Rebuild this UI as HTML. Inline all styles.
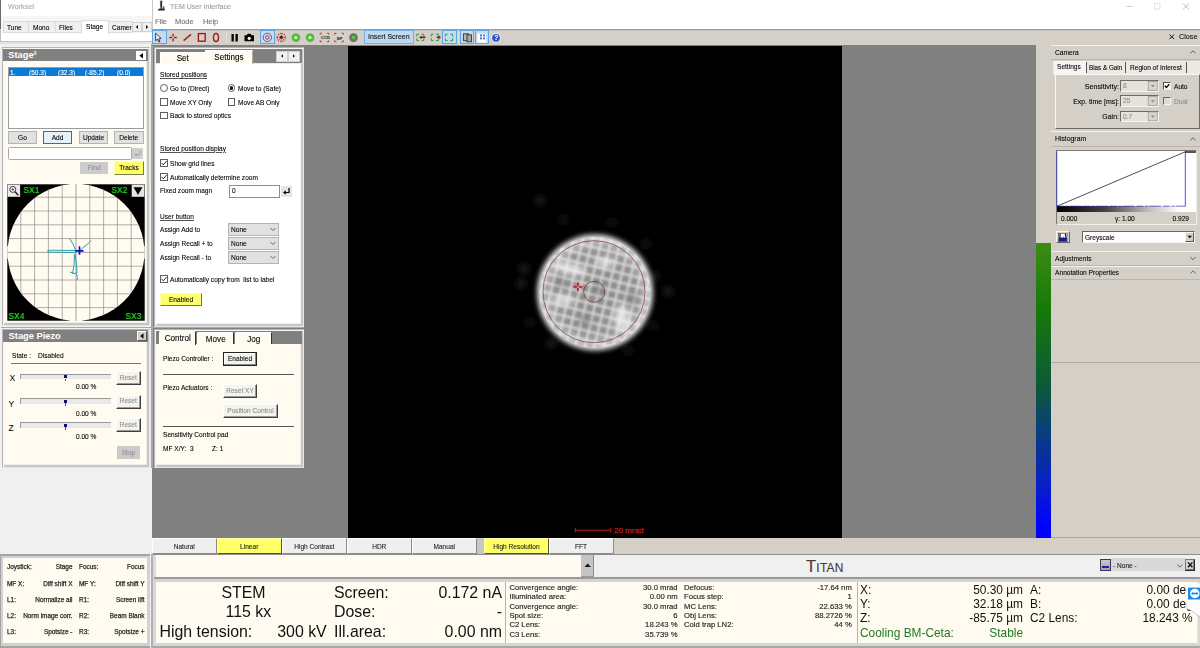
<!DOCTYPE html>
<html><head><meta charset="utf-8"><title>TEM User Interface</title>
<style>
*{box-sizing:border-box;margin:0;padding:0}
html,body{width:1200px;height:648px;overflow:hidden;background:#f0f0f0;font-family:"Liberation Sans",sans-serif;color:#000}
.a{position:absolute}
/* small UI text (MS Sans Serif look: narrow) */
.t{position:absolute;white-space:nowrap;font-size:7.5px;line-height:10px;height:10px;transform:scaleX(.875);transform-origin:0 50%;-webkit-text-stroke:0.100px currentColor}
.t.r{transform-origin:100% 50%;text-align:right}
.t.c{transform-origin:50% 50%;text-align:center}
.u{text-decoration:underline;text-decoration-color:#555;text-decoration-thickness:0.600px;text-underline-offset:0.800px}
.dis{color:#8c8c8c}
/* arial-like text */
.s{position:absolute;white-space:nowrap;font-size:7.7px;line-height:10px;height:10px}
.s.r{text-align:right}
.cream{background:#fffbf0}
.frame{position:absolute;border:1px solid;border-color:#b4b4b4 #e6e6e6 #e6e6e6 #b4b4b4;box-shadow:inset 1.200px 1.200px 0 #f6f6f6,inset -2.200px -2.200px 0 #c6c6c6}
.hdr{position:absolute;background:#808080;color:#fff;font-weight:bold;font-size:9.300px;line-height:12px;white-space:nowrap}
.flat{position:absolute;background:#e1e1e1;border:1px solid #b4b4b4}
.b3d{position:absolute;background:#f4f4ee;border:1px solid;border-color:#fff #404040 #404040 #fff;box-shadow:inset -1px -1px 0 #9a9a9a}
.cb{position:absolute;width:7.800px;height:7.800px;background:#fff;border:1px solid #5e5e5e}
.rb{position:absolute;width:7.800px;height:7.800px;background:#fff;border:1px solid #5e5e5e;border-radius:50%}
.sep{position:absolute;height:1px;background:#555}
</style></head><body>
<!-- ===== Workset window ===== -->
<div class="a" style="left:0;top:0;width:152px;height:41px;background:#fff"></div>
<div class="a" style="left:0;top:16px;width:152px;height:17px;background:#f6f6f6"></div>
<div class="a" style="left:0;top:41px;width:152px;height:1px;background:#c4c4c4"></div>
<div class="a" style="left:0;top:42px;width:152px;height:2px;background:#e2e2e2"></div>
<div class="a" style="left:0;top:0;width:1px;height:29px;background:#6a6a6a"></div>
<div class="a" style="left:0;top:29px;width:1px;height:13px;background:#bdbdbd"></div>
<div class="t" style="left:8px;top:2px;font-size:7.6px;color:#a9a9a9;transform:scaleX(.95)">Workset</div>
<!-- tabs -->
<div class="a" style="left:3px;top:21px;width:79px;height:12px;background:#f0f0f0;border:1px solid #dcdcdc"></div>
<div class="a" style="left:28px;top:22px;width:1px;height:10px;background:#dcdcdc"></div>
<div class="a" style="left:55px;top:22px;width:1px;height:10px;background:#dcdcdc"></div>
<div class="a" style="left:109px;top:21px;width:24px;height:12px;background:#f0f0f0;border:1px solid #dcdcdc;border-left:0"></div>
<div class="a" style="left:81px;top:20px;width:28px;height:14px;background:#fff;border:1px solid #dcdcdc;border-bottom:0"></div>
<div class="t" style="left:7px;top:22.800px">Tune</div>
<div class="t" style="left:33px;top:22.800px">Mono</div>
<div class="t" style="left:59px;top:22.800px">Files</div>
<div class="t" style="left:85.5px;top:21.800px">Stage</div>
<div class="t" style="left:111.5px;top:22.800px">Camer</div>
<div class="a" style="left:132px;top:22px;width:10px;height:10px;background:#f0f0f0;border:1px solid #d0d0d0"></div>
<div class="a" style="left:142px;top:22px;width:10px;height:10px;background:#f0f0f0;border:1px solid #d0d0d0"></div>
<svg class="a" style="left:132px;top:22px" width="20" height="10"><path d="M6 3v4l-2.2-2zM14 3v4l2.2-2z" fill="#111"/></svg>
<!-- ===== Stage panel ===== -->
<div class="frame cream" style="left:2px;top:47px;width:148px;height:279px"></div>
<div class="hdr" style="left:3.300px;top:48.500px;width:144.700px;height:12.700px;padding-left:5px;line-height:12.700px">Stage&#178;</div>
<div class="a" style="left:136px;top:50.5px;width:10px;height:9.5px;background:#fff"></div>
<svg class="a" style="left:136px;top:50.5px" width="10" height="10"><path d="M7 2v5.6L3.4 4.8z" fill="#000"/></svg>
<div class="a" style="left:7.5px;top:66.5px;width:136.5px;height:62px;background:#fff;border:1px solid #9a9ca0"></div>
<div class="a" style="left:8.500px;top:68px;width:134.500px;height:8.300px;background:#0a7ad6"></div>
<div class="t" style="left:10px;top:67.600px;color:#fff">1.</div>
<div class="t" style="left:29px;top:67.600px;color:#fff">(50.3)</div>
<div class="t" style="left:58px;top:67.600px;color:#fff">(32.3)</div>
<div class="t" style="left:85px;top:67.600px;color:#fff">(-85.2)</div>
<div class="t" style="left:117px;top:67.600px;color:#fff">(0.0)</div>
<div class="flat" style="left:8px;top:131px;width:29px;height:13px"></div><div class="t c" style="left:8px;top:132.5px;width:29px">Go</div>
<div class="flat" style="left:43px;top:131px;width:29px;height:13px;border:1.3px solid #0a78d7;background:#e5f1fb"></div><div class="t c" style="left:43px;top:132.5px;width:29px">Add</div>
<div class="flat" style="left:79px;top:131px;width:29px;height:13px"></div><div class="t c" style="left:79px;top:132.5px;width:29px">Update</div>
<div class="flat" style="left:114px;top:131px;width:29.5px;height:13px"></div><div class="t c" style="left:114px;top:132.5px;width:29.5px">Delete</div>
<div class="a" style="left:7.5px;top:146.5px;width:124px;height:13px;background:#fff;border:1px solid #a8a8a8;border-radius:1.500px"></div>
<div class="a" style="left:132px;top:148px;width:11px;height:10.5px;background:#cfcfcf"></div>
<svg class="a" style="left:132px;top:148px" width="11" height="11"><path d="M8 2.5v4.3H3.6" stroke="#a4a4a4" stroke-width="1" fill="none"/><path d="M4.6 4.9v3.8L2.4 6.8z" fill="#a4a4a4"/></svg>
<div class="a" style="left:79.5px;top:161.5px;width:28.5px;height:12px;background:#cccccc"></div><div class="t c dis" style="left:79.5px;top:162.5px;width:28.5px;color:#8f8f8f">Find</div>
<div class="a" style="left:114px;top:161px;width:30px;height:13.5px;background:#ffff6e;border:1px solid;border-color:#ffffb0 #7a7a46 #7a7a46 #ffffb0"></div><div class="t c" style="left:114px;top:162.5px;width:30px">Tracks</div>
<svg class="a" style="left:7px;top:184px" width="138" height="137" viewBox="7 184 138 137">
<defs><clipPath id="mc"><circle cx="76" cy="252.4" r="68.400"/></clipPath></defs>
<rect x="7.3" y="184.3" width="137.4" height="136.4" fill="#000"/>
<circle cx="76" cy="252.4" r="68.400" fill="#fffbf0"/><rect x="7.300" y="246" width="4" height="12.800" fill="#fffbf0"/><rect x="140.700" y="246" width="4" height="12.800" fill="#fffbf0"/>
<rect x="69.5" y="184" width="13" height="4" fill="#fffbf0"/><rect x="69.5" y="317" width="13" height="4" fill="#fffbf0"/>
<g clip-path="url(#mc)" stroke="#858585" stroke-width="0.650">
<path d="M20.8 184v137M34.6 184v137M48.4 184v137M62.2 184v137M89.8 184v137M103.6 184v137M117.4 184v137M131.2 184v137"/>
<path d="M7 197.2h138M7 211h138M7 224.8h138M7 238.6h138M7 266.2h138M7 280h138M7 293.8h138M7 307.6h138"/>
</g>
<path d="M76 184v137M7.3 252.4h137.4" stroke="#858585" stroke-width="0.750"/>
<g fill="none" stroke="#2fa0a6" stroke-width="1" stroke-linejoin="round">
<path d="M69.5 238.5l3.5 5.5 2.5 6 .5 2.5M91 240.5l-1.5 2-10 8"/>
<path d="M75 250.5l-26-.3-1.5 1 1.500 1 25.5.3 1 1.5-1.5 1.500"/>
<path d="M74.5 254.500l-.5 11-1.500 8 4.500-.5-.3-6-1.500-12M70 272l4 1.500M76.500 274l1 3.500-.5 2.500"/>
</g>
<path d="M79.500 246.300v8.500M75.300 250.900h8.200" stroke="#1010c0" stroke-width="1.600"/>
<rect x="7.600" y="184.600" width="12.500" height="12.200" fill="#ececec"/>
<circle cx="12.800" cy="189.400" r="3" fill="#fff" stroke="#222" stroke-width="0.9"/><path d="M11.300 189.400h3M12.800 187.900v3" stroke="#222" stroke-width="0.700"/><path d="M15 191.700l3.300 3.500" stroke="#222" stroke-width="1.600"/>
<rect x="131.700" y="184.600" width="12.600" height="12.200" fill="#e4e4e4"/><path d="M133.600 187.300h8.800l-4.400 7.700z" fill="#000"/>
<g fill="#1fe01f" stroke="#1fe01f" stroke-width="0.120" font-family="Liberation Sans, sans-serif" font-size="8.400">
<text x="23.500" y="193">SX1</text><text x="111.500" y="193">SX2</text><text x="8.500" y="318.500">SX4</text><text x="125.500" y="318.500">SX3</text></g>
</svg>
<!-- ===== Stage Piezo panel ===== -->
<div class="frame cream" style="left:2px;top:328.5px;width:148px;height:139px"></div>
<div class="hdr" style="left:3.300px;top:330px;width:144.700px;height:12.300px;padding-left:5.300px">Stage Piezo</div>
<div class="a" style="left:136.800px;top:331px;width:10px;height:10px;background:#d4d0c8;border:1px solid;border-color:#fff #555 #555 #fff"></div>
<svg class="a" style="left:136.800px;top:331px" width="10" height="10"><path d="M6.500 2.300v5.400L3.200 5z" fill="#000"/></svg>
<div class="t" style="left:11.500px;top:351px">State :</div><div class="t" style="left:37.500px;top:351px">Disabled</div>
<div class="sep" style="left:10.500px;top:362.700px;width:130.500px;height:1.600px;background:#787878"></div>
<!-- sliders -->
<div class="s" style="left:9.500px;top:372.500px;font-size:8.500px">X</div>
<div class="a" style="left:20px;top:373.500px;width:90.500px;height:5.500px;background:#e9e9e9;border-top:1px solid #9a9a9a;border-left:1px solid #9a9a9a"></div>
<div class="a" style="left:64px;top:375px;width:2.600px;height:3px;background:#101070"></div><div class="a" style="left:65px;top:378.500px;width:1px;height:2.500px;background:#555"></div>
<div class="b3d" style="left:116px;top:371px;width:24.500px;height:14px"></div><div class="t c dis" style="left:116px;top:372.500px;width:24.500px">Reset</div>
<div class="t" style="left:76px;top:381.500px">0.00 %</div>
<div class="s" style="left:8.500px;top:399px;font-size:8.500px">Y</div>
<div class="a" style="left:20px;top:398px;width:90.500px;height:5.500px;background:#e9e9e9;border-top:1px solid #9a9a9a;border-left:1px solid #9a9a9a"></div>
<div class="a" style="left:64px;top:399.500px;width:2.600px;height:3px;background:#101070"></div><div class="a" style="left:65px;top:403px;width:1px;height:2.500px;background:#555"></div>
<div class="b3d" style="left:116px;top:394.500px;width:24.500px;height:14px"></div><div class="t c dis" style="left:116px;top:396px;width:24.500px">Reset</div>
<div class="t" style="left:76px;top:408.500px">0.00 %</div>
<div class="s" style="left:8.500px;top:423px;font-size:8.500px">Z</div>
<div class="a" style="left:20px;top:422px;width:90.500px;height:5.500px;background:#e9e9e9;border-top:1px solid #9a9a9a;border-left:1px solid #9a9a9a"></div>
<div class="a" style="left:64px;top:423.500px;width:2.600px;height:3px;background:#101070"></div><div class="a" style="left:65px;top:427px;width:1px;height:2.500px;background:#555"></div>
<div class="b3d" style="left:116px;top:418px;width:24.500px;height:14px"></div><div class="t c dis" style="left:116px;top:419.500px;width:24.500px">Reset</div>
<div class="t" style="left:76px;top:432px">0.00 %</div>
<div class="a" style="left:117px;top:446px;width:23px;height:13px;background:#cacaca"></div><div class="t c" style="left:117px;top:447.500px;width:23px;color:#8f8f8f">Stop</div>


<!--WORKSET-->
<!-- ===== Main window backgrounds ===== -->
<div class="a" style="left:152px;top:0;width:1048px;height:29px;background:#fff"></div>
<div class="a" style="left:152px;top:0;width:1px;height:29px;background:#c8c8c8"></div>
<div class="a" style="left:152px;top:29px;width:1048px;height:525px;background:#d4d0c8"></div>
<div class="a" style="left:152px;top:28.500px;width:1048px;height:2.500px;background:linear-gradient(#8a8a88,#d4d0c8)"></div>
<div class="a" style="left:152px;top:44.800px;width:884px;height:493.200px;background:#808080"></div>
<div class="a" style="left:348px;top:45.500px;width:493.500px;height:492px;background:#000"></div>
<!-- title -->
<svg class="a" style="left:156px;top:0" width="11" height="12"><path d="M4.300 1.500h1.800v6.300h-1.800zM2.200 9.500c1.500-1.500 4.500-1.500 6.500-.5v1.500H1.800z" fill="#222"/><path d="M6.800 6.500h1.500v2.500H6.800z" fill="#2244aa"/><path d="M3.800 1.200h2.800" stroke="#222" stroke-width="0.800"/></svg>
<div class="t" style="left:169.700px;top:2px;font-size:7.600px;color:#9b9b9b;transform:scaleX(.925)">TEM User Interface</div>
<div class="t" style="left:155px;top:17px;font-size:7.800px;color:#6e6e6e;transform:scaleX(.95)">File</div>
<div class="t" style="left:175px;top:17px;font-size:7.800px;color:#6e6e6e;transform:scaleX(.95)">Mode</div>
<div class="t" style="left:203px;top:17px;font-size:7.800px;color:#6e6e6e;transform:scaleX(.95)">Help</div>
<svg class="a" style="left:1120px;top:0" width="80" height="14"><path d="M6.500 6.500h6" stroke="#c4c4c4" stroke-width="0.800"/><rect x="34.500" y="3.500" width="5.500" height="5.500" fill="none" stroke="#dcdcdc" stroke-width="0.800"/><path d="M63 3.500l6 6M69 3.500l-6 6" stroke="#a8a8a8" stroke-width="0.800"/></svg>
<!-- ===== Toolbar ===== -->
<div class="a" style="left:152px;top:29.500px;width:14.500px;height:14px;background:#c4dcf3;border:1px solid #62a5e4"></div>
<div class="a" style="left:260px;top:29.500px;width:14.500px;height:14px;background:#c4dcf3;border:1px solid #62a5e4"></div>
<div class="a" style="left:364px;top:30px;width:49.500px;height:13.500px;background:#bcd8f2;border:1px solid #76b0e8"></div>
<div class="a" style="left:442px;top:29.500px;width:14.700px;height:14px;background:#c4dcf3;border:1px solid #62a5e4"></div>
<div class="a" style="left:460.300px;top:29.500px;width:14.200px;height:14px;background:#c4dcf3;border:1px solid #62a5e4"></div>
<div class="a" style="left:474.800px;top:29.500px;width:14.400px;height:14px;background:#c4dcf3;border:1px solid #62a5e4"></div>
<div class="t" style="left:368px;top:31.800px;font-size:7.600px;transform:scaleX(.92);color:#111">Insert Screen</div>
<svg class="a" style="left:152px;top:29.500px" width="360" height="16" viewBox="152 29 360 16">
<path d="M155.700 32.300v7.400l1.800-1.600 1.300 2.900 1.200-.5-1.300-2.800 2.400-.2z" fill="#fff" stroke="#111" stroke-width="0.800" stroke-linejoin="round"/>
<g stroke="#a31a1a" fill="none" stroke-width="1.400">
<path d="M169.300 36.500h2.900M174 36.500h2.900M173.100 32.800v2.800M173.100 37.400v2.800"/>
<path d="M183.600 39.600l7.500-6.200"/>
<rect x="198.400" y="32.600" width="6.800" height="7.600"/>
<ellipse cx="216" cy="36.500" rx="2.500" ry="4" stroke-width="1.400"/>
</g>
<path d="M226.500 31v11" stroke="#e6e4de" stroke-width="0.800"/>
<path d="M231.500 33h2.300v7.600h-2.300zM235.500 33h2.300v7.600h-2.300z" fill="#000"/>
<path d="M244.500 34.300h2.300l.9-1.500h3l.9 1.500h2.400v6h-9.500z" fill="#000"/><circle cx="249.200" cy="37.300" r="1.600" fill="#fff"/>
<circle cx="267.300" cy="36.400" r="4.200" fill="#d8d8ee" stroke="#8a2048" stroke-width="0.800"/><circle cx="267.300" cy="36.400" r="1.800" fill="none" stroke="#5a2a5a" stroke-width="0.800"/>
<g stroke="#b02020" stroke-width="0.900" stroke-dasharray="1.400 0.800"><path d="M281.300 32v9M276.800 36.500h9M278.100 33.300l6.400 6.400M284.500 33.300l-6.400 6.400"/></g><circle cx="281.300" cy="36.500" r="4.200" fill="none" stroke="#b02020" stroke-width="0.900" stroke-dasharray="1.300 0.900"/><circle cx="281.300" cy="36.500" r="1.400" fill="#601010"/>
<circle cx="296.200" cy="37" r="4.200" fill="#8a9a80" opacity=".5"/><circle cx="295.800" cy="36.500" r="3.700" fill="#58c434" stroke="#46a82c" stroke-width="0.800"/><circle cx="295.800" cy="36.500" r="1.500" fill="#d8f6d0"/>
<circle cx="310.400" cy="37" r="4.200" fill="#8a9a80" opacity=".5"/><circle cx="310" cy="36.500" r="3.700" fill="#58c434" stroke="#46a82c" stroke-width="0.800"/><circle cx="310" cy="36.500" r="1.500" fill="#d8f6d0"/>
<g stroke="#c03030" stroke-width="0.900" fill="none"><path d="M320.200 33.800v-1.600h1.800M327 32.200h1.800v1.600M328.800 39.200v1.600H327M322 40.800h-1.800v-1.600"/><path d="M334.700 33.800v-1.600h1.800M341.500 32.200h1.800v1.600M343.300 39.200v1.600h-1.800M336.500 40.800h-1.800v-1.600"/></g>
<text x="321" y="38.400" font-family="Liberation Sans, sans-serif" font-size="4.100" font-weight="bold" fill="#111">CCD</text>
<text x="336.900" y="38.700" font-family="Liberation Sans, sans-serif" font-size="4.300" font-weight="bold" fill="#111">EF</text>
<circle cx="353.500" cy="36.600" r="4.300" fill="#6e6e6e"/><circle cx="353.500" cy="36.600" r="2" fill="#5cc43a"/>
<g fill="none" stroke="#2c9a4c" stroke-width="1"><path d="M416.8 35.5V33.2h2.3M421.5 33.2H423.8v2.3M423.8 37.300000000000004V39.6h-2.3M419.1 39.6H416.8v-2.3"/><path d="M431.3 35.5V33.2h2.3M436.0 33.2H438.3v2.3M438.3 37.300000000000004V39.6h-2.3M433.6 39.6H431.3v-2.3"/><path d="M445.4 35.5V33.2h2.3M450.3 33.2H452.6v2.3M452.6 37.300000000000004V39.6h-2.3M447.7 39.6H445.4v-2.3"/></g>
<path d="M419.200 36.300l2.300-1.900v1.200h4v1.400h-4v1.200z" fill="#a01010"/>
<path d="M441 36.300l-2.300-1.900v1.200h-2v1.400h2v1.200z" fill="#a01010"/>
<path d="M458.500 31v11" stroke="#e6e4de" stroke-width="0.800"/>
<rect x="463.600" y="32.800" width="4.600" height="7" fill="#b8b4ac" stroke="#222" stroke-width="0.800"/><rect x="467" y="33.800" width="4.400" height="7" fill="#a8a49c" stroke="#222" stroke-width="0.800"/>
<rect x="478" y="32.600" width="8" height="8.400" fill="#fff"/><path d="M477.800 32.600v8.700h8.200" stroke="#fff" stroke-width="1" fill="none"/><g fill="#4a78c8"><rect x="480" y="33.400" width="2" height="2"/><rect x="483" y="33.400" width="2" height="2"/><rect x="480" y="36.400" width="2" height="2"/><rect x="483" y="36.400" width="2" height="2"/></g>
<circle cx="496" cy="36.800" r="4.600" fill="#fff"/><circle cx="496" cy="36.800" r="3.900" fill="#2a52c8"/>
<text x="494.100" y="39.400" font-family="Liberation Sans, sans-serif" font-size="7" font-weight="bold" fill="#fff">?</text>
</svg>
<svg class="a" style="left:1166px;top:31px" width="12" height="12"><path d="M3.500 3.500l4.600 4.600M8.100 3.500l-4.600 4.600" stroke="#111" stroke-width="1"/></svg>
<div class="t" style="left:1179px;top:32px;font-size:7.600px;transform:scaleX(.95);color:#111">Close</div>

<!-- ===== Set / Settings panel ===== -->
<div class="frame" style="left:153.500px;top:47px;width:150px;height:280px;background:#fff"></div>
<div class="a" style="left:155.500px;top:49px;width:146px;height:14px;background:#808080"></div>
<div class="a" style="left:155.500px;top:63px;width:146px;height:1px;background:#e8e8e8"></div>
<div class="a cream" style="left:159.500px;top:51.500px;width:45.500px;height:12px;border-top:1px solid #fff;border-left:1px solid #fff"></div>
<div class="a cream" style="left:205px;top:49.500px;width:48px;height:14px;border-top:1px solid #fff;border-left:1px solid #fff;border-right:1px solid #b0b0a8"></div>
<div class="t c" style="left:159.500px;top:53px;width:45.500px;font-size:9px;transform:scaleX(.9)">Set</div>
<div class="t c" style="left:205px;top:51.500px;width:48px;font-size:9px;transform:scaleX(.9)">Settings</div>
<div class="a" style="left:275.500px;top:50.700px;width:12px;height:11px;background:#f0f0f0;border:1px solid #cfcfcf"></div>
<div class="a" style="left:287.500px;top:50.700px;width:12px;height:11px;background:#f0f0f0;border:1px solid #cfcfcf"></div>
<svg class="a" style="left:275.500px;top:51px" width="24" height="10"><path d="M7 3.200v3.600L5 5zM17 3.200v3.600L19 5z" fill="#111"/></svg>
<div class="t u" style="left:160.400px;top:70.200px">Stored positions</div>
<div class="rb" style="left:160.400px;top:84px"></div><div class="t" style="left:170.300px;top:83.700px">Go to (Direct)</div>
<div class="rb" style="left:227.700px;top:84px"></div><div class="a" style="left:229.900px;top:86.200px;width:3.400px;height:3.400px;border-radius:50%;background:#111"></div><div class="t" style="left:238px;top:83.700px">Move to (Safe)</div>
<div class="cb" style="left:160.400px;top:98px"></div><div class="t" style="left:170.300px;top:97.700px">Move XY Only</div>
<div class="cb" style="left:227.700px;top:98px"></div><div class="t" style="left:238px;top:97.700px">Move AB Only</div>
<div class="cb" style="left:160.400px;top:111.700px"></div><div class="t" style="left:170.300px;top:111.400px">Back to stored optics</div>
<div class="t u" style="left:160.400px;top:143.700px">Stored position display</div>
<div class="cb" style="left:160.400px;top:159px"></div><div class="t" style="left:170.300px;top:158.700px">Show grid lines</div>
<div class="cb" style="left:160.400px;top:173px"></div><div class="t" style="left:170.300px;top:172.700px">Automatically determine zoom</div>
<svg class="a" style="left:160.400px;top:159px" width="8" height="8"><path d="M1.600 4l1.700 1.800L6.600 2" stroke="#111" stroke-width="0.900" fill="none"/></svg>
<svg class="a" style="left:160.400px;top:173px" width="8" height="8"><path d="M1.600 4l1.700 1.800L6.600 2" stroke="#111" stroke-width="0.900" fill="none"/></svg>
<div class="t" style="left:160.400px;top:186.400px">Fixed zoom magn</div>
<div class="a" style="left:229px;top:184.500px;width:50.500px;height:13px;background:#fff;border:1px solid #8e8e8e"></div><div class="t" style="left:232px;top:186.400px">0</div>
<div class="a" style="left:280.500px;top:186px;width:11px;height:10.500px;background:#e4e4e4"></div>
<svg class="a" style="left:280.500px;top:186px" width="11" height="11"><path d="M8 2v4.500H3.600" stroke="#000" stroke-width="1.200" fill="none"/><path d="M4.800 4.300v4.400L2 6.500z" fill="#000"/></svg>
<div class="t u" style="left:160.400px;top:211.700px">User button</div>
<div class="t" style="left:160.400px;top:225.000px">Assign Add to</div>
<div class="t" style="left:160.400px;top:239.000px">Assign Recall + to</div>
<div class="t" style="left:160.400px;top:252.700px">Assign Recall - to</div>
<div class="flat" style="left:228px;top:223px;width:50.500px;height:12.500px"></div><div class="t" style="left:230.500px;top:225.000px">None</div>
<div class="flat" style="left:228px;top:237px;width:50.500px;height:12.500px"></div><div class="t" style="left:230.500px;top:239.000px">None</div>
<div class="flat" style="left:228px;top:251px;width:50.500px;height:12.500px"></div><div class="t" style="left:230.500px;top:252.700px">None</div>
<svg class="a" style="left:268px;top:223px" width="10" height="41"><path d="M2.500 5l2.500 2.500L7.500 5M2.500 19l2.500 2.500L7.500 19M2.500 33l2.500 2.500L7.500 33" stroke="#444" stroke-width="0.800" fill="none"/></svg>
<div class="cb" style="left:160.400px;top:275.300px"></div><div class="t" style="left:170.300px;top:275.000px">Automatically copy from&nbsp; list to label</div>
<svg class="a" style="left:160.400px;top:275.300px" width="8" height="8"><path d="M1.600 4l1.700 1.800L6.600 2" stroke="#111" stroke-width="0.900" fill="none"/></svg>
<div class="a" style="left:160px;top:293.300px;width:42px;height:13.200px;background:#ffff6e;border:1px solid;border-color:#ffffb0 #77774a #77774a #ffffb0"></div><div class="t c" style="left:160px;top:294.500px;width:42px">Enabled</div>
<!-- ===== Control / Move / Jog panel ===== -->
<div class="frame cream" style="left:153.500px;top:328.500px;width:150px;height:139px"></div>
<div class="a" style="left:155.500px;top:330.500px;width:146px;height:13.500px;background:#808080"></div>
<div class="a cream" style="left:158.700px;top:330.500px;width:37.500px;height:14.500px;border-radius:2px 2px 0 0;border:1px solid #fff;border-bottom:0;border-right:1px solid #333"></div>
<div class="a cream" style="left:196.700px;top:332px;width:37.500px;height:12px;border-radius:2px 2px 0 0;border:1px solid #fff;border-bottom:0;border-right:1px solid #333"></div>
<div class="a cream" style="left:234.700px;top:332px;width:37.500px;height:12px;border-radius:2px 2px 0 0;border:1px solid #fff;border-bottom:0;border-right:1px solid #333"></div>
<div class="t c" style="left:158.700px;top:332.500px;width:37.500px;font-size:9px;transform:scaleX(.9)">Control</div>
<div class="t c" style="left:196.700px;top:334px;width:37.500px;font-size:9px;transform:scaleX(.9)">Move</div>
<div class="t c" style="left:234.700px;top:334px;width:37.500px;font-size:9px;transform:scaleX(.9)">Jog</div>
<div class="t" style="left:163px;top:354.000px">Piezo Controller :</div>
<div class="a" style="left:223px;top:351.700px;width:34px;height:14px;background:#f0f4ee;border:1px solid #222;box-shadow:inset -1px -1px 0 #8a8a8a,inset 1px 1px 0 #fff"></div><div class="t c" style="left:223px;top:354.000px;width:34px">Enabled</div>
<div class="sep" style="left:163px;top:374px;width:130.500px;height:1.100px"></div>
<div class="t" style="left:163px;top:383.300px">Piezo Actuators :</div>
<div class="b3d" style="left:223px;top:383.700px;width:34px;height:14px"></div><div class="t c dis" style="left:223px;top:386.000px;width:34px">Reset XY</div>
<div class="b3d" style="left:223px;top:403.700px;width:55px;height:14px"></div><div class="t c dis" style="left:223px;top:406.000px;width:55px">Position Control</div>
<div class="sep" style="left:163px;top:426px;width:130.500px;height:1.100px"></div>
<div class="t" style="left:163px;top:430.300px">Sensitivity Control pad</div>
<div class="t" style="left:163px;top:444.000px">MF X/Y:&nbsp; 3</div><div class="t" style="left:212px;top:444.000px">Z: 1</div>
<div class="a" style="left:151.200px;top:44px;width:1.600px;height:424px;background:#a6a6a6"></div>
<div class="a" style="left:1px;top:326.700px;width:303px;height:1px;background:#a8a8a8"></div>
<!-- ===== Central image ===== -->
<svg class="a" style="left:348px;top:45.500px" width="493.500" height="492" viewBox="348 45.500 493.500 492">
<defs>
<pattern id="sq" width="9.200" height="9.200" patternUnits="userSpaceOnUse" patternTransform="rotate(14 595 292)"><rect width="9.200" height="9.200" fill="#d8d8d8"/><rect x="1.100" y="1.100" width="7.200" height="7.200" fill="#8c8c8c"/></pattern>
<filter id="bl" x="-10%" y="-10%" width="120%" height="120%"><feGaussianBlur stdDeviation="1.100"/></filter>
<filter id="bl2" x="-20%" y="-20%" width="140%" height="140%"><feGaussianBlur stdDeviation="2.800"/></filter>
<filter id="bl3" x="-50%" y="-50%" width="200%" height="200%"><feGaussianBlur stdDeviation="3"/></filter>
<radialGradient id="rg" cx="595" cy="292" r="58" gradientUnits="userSpaceOnUse"><stop offset="0" stop-color="#fff" stop-opacity="0"/><stop offset=".72" stop-color="#fff" stop-opacity=".05"/><stop offset=".93" stop-color="#fff" stop-opacity=".45"/><stop offset="1" stop-color="#fff" stop-opacity=".5"/></radialGradient>
<clipPath id="dc"><circle cx="595" cy="292" r="55.500"/></clipPath>
</defs>
<g fill="#1e1e1e" filter="url(#bl3)"><circle cx="540" cy="200" r="5"/><circle cx="563" cy="219" r="4"/><circle cx="612" cy="222" r="4"/><circle cx="524" cy="268" r="5"/><circle cx="521" cy="283" r="5"/><circle cx="654" cy="276" r="5"/><circle cx="668" cy="291" r="5"/><circle cx="653" cy="325" r="4"/><circle cx="551" cy="343" r="5"/><circle cx="628" cy="350" r="4"/><circle cx="530" cy="322" r="4"/><circle cx="646" cy="243" r="4"/></g>
<circle cx="595" cy="292" r="58" fill="#e2e2e2" filter="url(#bl2)"/>
<g clip-path="url(#dc)"><rect x="530" y="227" width="130" height="130" fill="url(#sq)" filter="url(#bl)"/>
<g filter="url(#bl3)" fill="#f4f4f4" opacity=".75"><ellipse cx="570" cy="268" rx="16" ry="6" transform="rotate(14 570 268)"/><ellipse cx="622" cy="318" rx="8" ry="14"/><ellipse cx="563" cy="300" rx="12" ry="5"/><ellipse cx="605" cy="262" rx="10" ry="5"/></g>
<g filter="url(#bl3)" fill="#777" opacity=".6"><circle cx="598" cy="289" r="5"/><circle cx="632" cy="298" r="6"/><circle cx="585" cy="320" r="6"/><circle cx="560" cy="282" r="5"/></g>
<circle cx="595" cy="292" r="58" fill="url(#rg)"/></g>
<circle cx="594" cy="291.200" r="51" fill="none" stroke="#7c2c2c" stroke-width="0.650"/>
<circle cx="594.100" cy="291.300" r="10.500" fill="none" stroke="#6c2424" stroke-width="0.650"/>
<path d="M577.900 282v3.300M577.900 287.500v3.300M573.500 286.400h3.300M579 286.400h3.300" stroke="#d8182c" stroke-width="1.800"/>
<path d="M575.300 529.700h35.500M575.300 527.500v4.400M610.800 527.500v4.400" stroke="#c41a1a" stroke-width="1"/>
<text x="614" y="532.700" font-family="Liberation Sans, sans-serif" font-size="8" fill="#c41a1a" stroke="#c41a1a" stroke-width="0.250">20 mrad</text>
</svg>

<!-- ===== Right panel ===== -->
<div class="a" style="left:1036px;top:243px;width:15.300px;height:294.500px;background:linear-gradient(#3c8c14 0%,#167a08 22%,#0c5a38 48%,#0a3c80 65%,#0820c8 82%,#0000ff 97%)"></div>
<div class="a" style="left:1051px;top:45px;width:149px;height:492px;background:#d4d0c8"></div>
<div class="a" style="left:1051px;top:537px;width:149px;height:1px;background:#a8a6a0"></div>
<!-- Camera header -->
<div class="a" style="left:1051.300px;top:44.500px;width:149px;height:1px;background:#f4f2ee"></div>
<div class="a" style="left:1051.300px;top:59px;width:149px;height:1px;background:#bab6ae"></div>
<div class="t" style="left:1054.500px;top:48.100px;font-size:7.600px">Camera</div>
<svg class="a" style="left:1188px;top:48px" width="10" height="8"><path d="M2.300 5.500L5 2.800l2.700 2.700" stroke="#555" stroke-width="0.900" fill="none"/></svg>
<!-- tabs -->
<div class="a" style="left:1053px;top:60.500px;width:147px;height:13.500px;background:#ebe9e4"></div>
<div class="a" style="left:1053.500px;top:60.500px;width:32px;height:14px;background:#f6f5f2"></div>
<div class="a" style="left:1085.500px;top:62px;width:1px;height:11px;background:#555"></div>
<div class="a" style="left:1125px;top:62px;width:1px;height:11px;background:#555"></div>
<div class="a" style="left:1186px;top:62px;width:1px;height:11px;background:#555"></div>
<div class="t" style="left:1057px;top:62px">Settings</div>
<div class="t" style="left:1089px;top:62.700px;transform:scaleX(.84)">Bias &amp; Gain</div>
<div class="t" style="left:1130px;top:62.700px">Region of Interest</div>
<div class="a" style="left:1054.500px;top:74px;width:145.200px;height:54.500px;background:#d4d0c8;border:1px solid;border-color:#f8f8f6 #6a6a66 #6a6a66 #f8f8f6"></div>
<div class="t r" style="left:1049.300px;top:81.900px;width:70px;transform:scaleX(.955)">Sensitivity:</div>
<div class="t r" style="left:1049.300px;top:96.900px;width:70px;transform:scaleX(.925)">Exp. time [ms]:</div>
<div class="t r" style="left:1049.300px;top:111.900px;width:70px;transform:scaleX(.93)">Gain:</div>
<div class="a" style="left:1120px;top:80px;width:38.500px;height:11.500px;background:#e4e2dc;border:1px solid;border-color:#6a6a66 #f4f4f2 #f4f4f2 #6a6a66"></div>
<div class="a" style="left:1120px;top:95.300px;width:38.500px;height:11.500px;background:#e4e2dc;border:1px solid;border-color:#6a6a66 #f4f4f2 #f4f4f2 #6a6a66"></div>
<div class="a" style="left:1120px;top:110.600px;width:38.500px;height:11.500px;background:#e4e2dc;border:1px solid;border-color:#6a6a66 #f4f4f2 #f4f4f2 #6a6a66"></div>
<div class="t" style="left:1122.500px;top:81px;color:#8a8a86">8</div>
<div class="t" style="left:1122.500px;top:96.300px;color:#8a8a86">25</div>
<div class="t" style="left:1122.500px;top:111.600px;color:#8a8a86">0.7</div>
<svg class="a" style="left:1147px;top:80px" width="12" height="43"><g fill="#d8d5ce" stroke="#8a8882" stroke-width="0.600"><rect x="1.200" y="1.300" width="9" height="9"/><rect x="1.200" y="16.600" width="9" height="9"/><rect x="1.200" y="31.900" width="9" height="9"/></g><path d="M3.800 5l2 2.200 2-2.200zM3.800 20.300l2 2.200 2-2.200zM3.800 35.600l2 2.200 2-2.200z" fill="#8a8882"/></svg>
<div class="a" style="left:1162.500px;top:82px;width:8px;height:8px;background:#fff;border:1px solid;border-color:#555 #eee #eee #555"></div>
<svg class="a" style="left:1162.500px;top:82px" width="8" height="8"><path d="M1.800 3.600l1.600 1.900 2.900-3.300" stroke="#000" stroke-width="1.300" fill="none"/></svg>
<div class="t" style="left:1174px;top:81.900px">Auto</div>
<div class="a" style="left:1162.500px;top:97.300px;width:8px;height:8px;background:#dedbd4;border:1px solid;border-color:#666 #f4f4f2 #f4f4f2 #666"></div>
<div class="t" style="left:1174px;top:96.900px;color:#8a8a86">Dual</div>
<!-- Histogram -->
<div class="a" style="left:1051.300px;top:131px;width:149px;height:1px;background:#f4f2ee"></div>
<div class="a" style="left:1051.300px;top:146px;width:149px;height:1px;background:#bab6ae"></div>
<div class="t" style="left:1054.500px;top:134.300px;font-size:7.600px;transform:scaleX(.9)">Histogram</div>
<svg class="a" style="left:1188px;top:134.500px" width="10" height="8"><path d="M2.300 5.500L5 2.800l2.700 2.700" stroke="#555" stroke-width="0.900" fill="none"/></svg>
<div class="a" style="left:1055.500px;top:150.200px;width:141px;height:75.300px;border:1px solid;border-color:#7a7a76 #f0f0ee #f0f0ee #7a7a76"></div>
<div class="a" style="left:1056.500px;top:151px;width:139.500px;height:55px;background:#fff"></div>
<div class="a" style="left:1056.500px;top:206px;width:139.500px;height:5.500px;background:linear-gradient(90deg,#000 0%,#444 35%,#bbb 65%,#fff 88%)"></div>
<svg class="a" style="left:1056px;top:150.500px" width="141" height="56"><path d="M0.800 0.500v55M129.300 0.500v55" stroke="#4040d8" stroke-width="0.900"/><path d="M0.800 55.300L129.300 0.800" stroke="#222" stroke-width="0.800" fill="none"/><path d="M129 1h11" stroke="#111" stroke-width="1.400"/><path d="M1 55.200h128" stroke="#3030b0" stroke-width="0.700" stroke-dasharray="7 1.500 3 1 12 2"/></svg>
<div class="t" style="left:1060.500px;top:213.700px">0.000</div>
<div class="t" style="left:1115px;top:213.700px">&#947;: 1.00</div>
<div class="t r" style="left:1139px;top:213.700px;width:50px">0.929</div>
<div class="a" style="left:1056px;top:230.700px;width:13.500px;height:12.800px;background:#d4d0c8;border:1px solid;border-color:#f6f6f4 #666 #666 #f6f6f4"></div>
<svg class="a" style="left:1056px;top:230.700px" width="14" height="13"><rect x="2.500" y="2.300" width="8.500" height="8.500" fill="#fff" stroke="#222" stroke-width="0.500"/><path d="M2.800 10.600V7.500l1.200-3.800.9 3.500 1.200-1.800.8 2 .9-2 1.100 1.800 1-3.500 1 3.800v3.100z" fill="#1a1a80"/><path d="M4 2.800v2.500M9.500 2.800v2.500" stroke="#111" stroke-width="1.200"/></svg>
<div class="a" style="left:1082px;top:231.300px;width:113px;height:11.700px;background:#fff;border:1px solid;border-color:#666 #f4f4f2 #f4f4f2 #666"></div>
<div class="t" style="left:1084.500px;top:233.300px">Greyscale</div>
<div class="a" style="left:1184.500px;top:232.300px;width:9.500px;height:9.700px;background:#d4d0c8;border:1px solid;border-color:#f6f6f4 #555 #555 #f6f6f4"></div>
<svg class="a" style="left:1184.500px;top:232.300px" width="10" height="10"><path d="M2.600 3.800l2.200 2.400L7 3.800z" fill="#000"/></svg>
<!-- Adjustments / Annotation -->
<div class="a" style="left:1051.300px;top:250.700px;width:149px;height:1px;background:#f4f2ee"></div>
<div class="a" style="left:1051.300px;top:265.300px;width:149px;height:1px;background:#bab6ae"></div>
<div class="a" style="left:1051.300px;top:266.300px;width:149px;height:1px;background:#f4f2ee"></div>
<div class="a" style="left:1051.300px;top:279.300px;width:149px;height:1px;background:#bab6ae"></div>
<div class="a" style="left:1051.300px;top:362px;width:149px;height:1px;background:#aeaaa2"></div>
<div class="t" style="left:1054.500px;top:253.800px;font-size:7.600px">Adjustments</div>
<div class="t" style="left:1054.500px;top:267.800px;font-size:7.600px">Annotation Properties</div>
<svg class="a" style="left:1188px;top:254px" width="10" height="22"><path d="M2.300 3l2.700 2.700L7.700 3" stroke="#555" stroke-width="0.900" fill="none"/><path d="M2.300 19.500L5 16.800l2.700 2.700" stroke="#555" stroke-width="0.900" fill="none"/></svg>

<!-- ===== Display-mode buttons ===== -->
<div class="a" style="left:152px;top:538px;width:64.500px;height:15.500px;background:#efefef;border:1px solid;border-color:#fff #8a8a8a #8a8a8a #fff"></div>
<div class="a" style="left:217px;top:538px;width:64.500px;height:15.500px;background:#ffff66;border:1px solid;border-color:#ffffb0 #555530 #555530 #ffffb0"></div>
<div class="a" style="left:282.300px;top:538px;width:64.500px;height:15.500px;background:#efefef;border:1px solid;border-color:#fff #8a8a8a #8a8a8a #fff"></div>
<div class="a" style="left:347.300px;top:538px;width:64.500px;height:15.500px;background:#efefef;border:1px solid;border-color:#fff #8a8a8a #8a8a8a #fff"></div>
<div class="a" style="left:412.300px;top:538px;width:64.500px;height:15.500px;background:#efefef;border:1px solid;border-color:#fff #8a8a8a #8a8a8a #fff"></div>
<div class="a" style="left:477px;top:538px;width:7px;height:15.500px;background:#c8c6c0"></div>
<div class="a" style="left:484px;top:538px;width:64.800px;height:15.500px;background:#ffff66;border:1px solid;border-color:#ffffb0 #555530 #555530 #ffffb0"></div>
<div class="a" style="left:549.300px;top:538px;width:64.300px;height:15.500px;background:#efefef;border:1px solid;border-color:#fff #8a8a8a #8a8a8a #fff"></div>
<div class="t c" style="left:152px;top:541.500px;width:64.500px;color:#222">Natural</div>
<div class="t c" style="left:217px;top:541.500px;width:64.500px;color:#222">Linear</div>
<div class="t c" style="left:282.300px;top:541.500px;width:64.500px;color:#222">High Contrast</div>
<div class="t c" style="left:347.300px;top:541.500px;width:64.500px;color:#222">HDR</div>
<div class="t c" style="left:412.300px;top:541.500px;width:64.500px;color:#222">Manual</div>
<div class="t c" style="left:484px;top:541.500px;width:64.800px;color:#222">High Resolution</div>
<div class="t c" style="left:549.300px;top:541.500px;width:64px;color:#222">FFT</div>
<!-- ===== Joystick panel ===== -->
<div class="a" style="left:0;top:554px;width:150.300px;height:94px;background:#a4a4a4"></div><div class="a" style="left:1.400px;top:555.600px;width:148.300px;height:90.700px;background:#d2d2d2"></div>
<div class="a" style="left:3.300px;top:558.300px;width:143.400px;height:84.700px;background:#fffbf0"></div>
<div class="a" style="left:149.700px;top:554px;width:1.300px;height:94px;background:#f2f2f2"></div><div class="a" style="left:151px;top:554px;width:1.700px;height:94px;background:#b0b0b0"></div>
<div id="joy" style="will-change:transform;font-size:6.450px;color:#2a2a2a;-webkit-text-stroke:0.250px #2a2a2a">
<div class="s" style="left:7px;top:562.200px;font-size:inherit">Joystick:</div><div class="s r" style="left:22px;top:562.200px;width:50.500px;font-size:inherit">Stage</div>
<div class="s" style="left:79px;top:562.200px;font-size:inherit">Focus:</div><div class="s r" style="left:94px;top:562.200px;width:50.500px;font-size:inherit">Focus</div>
<div class="s" style="left:7px;top:578.500px;font-size:inherit">MF X:</div><div class="s r" style="left:22px;top:578.500px;width:50.500px;font-size:inherit">Diff shift X</div>
<div class="s" style="left:79px;top:578.500px;font-size:inherit">MF Y:</div><div class="s r" style="left:94px;top:578.500px;width:50.500px;font-size:inherit">Diff shift Y</div>
<div class="s" style="left:7px;top:594.700px;font-size:inherit">L1:</div><div class="s r" style="left:22px;top:594.700px;width:50.500px;font-size:inherit">Normalize all</div>
<div class="s" style="left:79px;top:594.700px;font-size:inherit">R1:</div><div class="s r" style="left:94px;top:594.700px;width:50.500px;font-size:inherit">Screen lift</div>
<div class="s" style="left:7px;top:610.900px;font-size:inherit">L2:</div><div class="s r" style="left:22px;top:610.900px;width:50.500px;font-size:inherit">Norm image corr.</div>
<div class="s" style="left:79px;top:610.900px;font-size:inherit">R2:</div><div class="s r" style="left:94px;top:610.900px;width:50.500px;font-size:inherit">Beam Blank</div>
<div class="s" style="left:7px;top:627.200px;font-size:inherit">L3:</div><div class="s r" style="left:22px;top:627.200px;width:50.500px;font-size:inherit">Spotsize -</div>
<div class="s" style="left:79px;top:627.200px;font-size:inherit">R3:</div><div class="s r" style="left:94px;top:627.200px;width:50.500px;font-size:inherit">Spotsize +</div>
</div>
<!-- ===== Info area ===== -->
<div class="a" style="left:152.700px;top:554px;width:1047.300px;height:94px;background:#d8d8d8"></div>
<div class="a" style="left:152.500px;top:554px;width:1047.500px;height:1px;background:#8e8e8e"></div>
<div class="a" style="left:154px;top:555px;width:1046px;height:22px;background:#dcdcdc"></div><div class="a" style="left:155.500px;top:555.300px;width:1044.500px;height:21.700px;background:#fffbf0"></div>
<div class="a" style="left:580.500px;top:555px;width:13.500px;height:22px;background:#c4c4c4;border-right:1px solid #8a8a8a;border-bottom:1px solid #9a9a9a"></div>
<svg class="a" style="left:580.500px;top:555px" width="14" height="22"><path d="M3.500 12h6.400L6.700 8.400z" fill="#111"/></svg>
<div class="a" style="left:594px;top:555px;width:606px;height:22px;background:#f0f0f0"></div>
<div class="a" style="left:154px;top:577px;width:1046px;height:1.600px;background:#9a9a9a"></div>
<div class="a" style="left:154px;top:578.600px;width:1046px;height:3px;background:#d4d4d4"></div>
<div class="a" style="left:155.500px;top:581.700px;width:1041.300px;height:61.600px;background:#fffbf0"></div>
<div class="a" style="left:153px;top:643.300px;width:1047px;height:3px;background:#d6d6d6"></div><div class="a" style="left:152.500px;top:646.300px;width:1047.500px;height:1.700px;background:#a8a8a8"></div>
<div class="a" style="left:1197px;top:581.500px;width:1px;height:62px;background:#e8e8e8"></div>
<div class="a" style="left:505px;top:582px;width:1px;height:61px;background:#b6b4aa"></div>
<div class="a" style="left:856.500px;top:582px;width:1px;height:61px;background:#b6b4aa"></div>
<!-- TITAN -->
<div class="a" style="left:806px;top:556px;white-space:nowrap;color:#4e3838;font-size:12px;line-height:20px;letter-spacing:.25px;transform-origin:0 50%;-webkit-text-stroke:0.150px #4e3838"><span style="font-size:16.500px">T</span>ITAN</div>
<div class="a" style="left:1100px;top:558.800px;width:11px;height:12px;background:linear-gradient(#c8c8c8,#a4a4a4);border:1.400px solid #3a3a4a"></div>
<div class="a" style="left:1102.300px;top:566.300px;width:6.400px;height:2.200px;background:#1818d0"></div>
<div class="a" style="left:1111px;top:558.300px;width:73.500px;height:13.200px;background:#d9d9d9"></div>
<div class="t" style="left:1113.300px;top:560.800px;color:#222">- None -</div>
<svg class="a" style="left:1175px;top:560.800px" width="10" height="10"><path d="M2.300 3.600l2.500 2.600 2.500-2.600" stroke="#444" stroke-width="0.800" fill="none"/></svg>
<div class="a" style="left:1184.500px;top:558.800px;width:10.300px;height:11.900px;background:#d4d4d4;border:1px solid;border-color:#777 #2a2a2a #2a2a2a #777;box-shadow:inset -0.700px -0.700px 0 #555"></div>
<svg class="a" style="left:1184.500px;top:559px" width="11" height="12"><path d="M3 3.400l4.400 4.800M7.400 3.400L3 8.200" stroke="#111" stroke-width="1.400"/></svg>
<!-- big status -->
<div id="big" style="will-change:transform;font-size:15.900px;color:#111">
<div class="a" style="left:221.400px;top:582.500px;line-height:19px;white-space:nowrap">STEM</div>
<div class="a" style="left:225.600px;top:601.700px;line-height:19px;white-space:nowrap">115 kx</div>
<div class="a" style="left:159.500px;top:622px;line-height:19px;white-space:nowrap">High tension:</div>
<div class="a" style="left:226.700px;top:622px;width:100px;text-align:right;line-height:19px;white-space:nowrap">300 kV</div>
<div class="a" style="left:334px;top:582.500px;line-height:19px;white-space:nowrap">Screen:</div>
<div class="a" style="left:334px;top:601.700px;line-height:19px;white-space:nowrap">Dose:</div>
<div class="a" style="left:334px;top:622px;line-height:19px;white-space:nowrap">Ill.area:</div>
<div class="a" style="left:402px;top:582.500px;width:100px;text-align:right;line-height:19px;white-space:nowrap">0.172 nA</div>
<div class="a" style="left:402px;top:601.700px;width:100px;text-align:right;line-height:19px;white-space:nowrap">-</div>
<div class="a" style="left:402px;top:622px;width:100px;text-align:right;line-height:19px;white-space:nowrap">0.00 nm</div>
</div>
<div id="sm" style="will-change:transform;color:#262626;-webkit-text-stroke:0.150px #262626">
<div class="s" style="left:509.400px;top:582.900px">Convergence angle:</div><div class="s r" style="left:597.600px;top:582.900px;width:80px">30.0 mrad</div>
<div class="s" style="left:509.400px;top:592.250px">Illuminated area:</div><div class="s r" style="left:597.600px;top:592.250px;width:80px">0.00 nm</div>
<div class="s" style="left:509.400px;top:601.600px">Convergence angle:</div><div class="s r" style="left:597.600px;top:601.600px;width:80px">30.0 mrad</div>
<div class="s" style="left:509.400px;top:610.950px">Spot size:</div><div class="s r" style="left:597.600px;top:610.950px;width:80px">6</div>
<div class="s" style="left:509.400px;top:620.300px">C2 Lens:</div><div class="s r" style="left:597.600px;top:620.300px;width:80px">18.243 %</div>
<div class="s" style="left:509.400px;top:629.650px">C3 Lens:</div><div class="s r" style="left:597.600px;top:629.650px;width:80px">35.739 %</div>
<div class="s" style="left:684px;top:582.900px">Defocus:</div><div class="s r" style="left:771.800px;top:582.900px;width:80px">-17.64 nm</div>
<div class="s" style="left:684px;top:592.250px">Focus step:</div><div class="s r" style="left:771.800px;top:592.250px;width:80px">1</div>
<div class="s" style="left:684px;top:601.600px">MC Lens:</div><div class="s r" style="left:771.800px;top:601.600px;width:80px">22.633 %</div>
<div class="s" style="left:684px;top:610.950px">Obj Lens:</div><div class="s r" style="left:771.800px;top:610.950px;width:80px">88.2726 %</div>
<div class="s" style="left:684px;top:620.300px">Cold trap LN2:</div><div class="s r" style="left:771.800px;top:620.300px;width:80px">44 %</div>
</div>
<div id="md" style="will-change:transform;font-size:11.900px;color:#111">
<div class="a" style="left:860px;top:582.500px;line-height:14px;white-space:nowrap">X:</div><div class="a" style="left:903px;top:582.500px;width:120px;text-align:right;line-height:14px;white-space:nowrap">50.30 &#181;m</div>
<div class="a" style="left:860px;top:596.900px;line-height:14px;white-space:nowrap">Y:</div><div class="a" style="left:903px;top:596.900px;width:120px;text-align:right;line-height:14px;white-space:nowrap">32.18 &#181;m</div>
<div class="a" style="left:860px;top:611.200px;line-height:14px;white-space:nowrap">Z:</div><div class="a" style="left:903px;top:611.200px;width:120px;text-align:right;line-height:14px;white-space:nowrap">-85.75 &#181;m</div>
<div class="a" style="left:860px;top:625.500px;line-height:14px;white-space:nowrap;color:#1e7a22">Cooling BM-Ceta:</div><div class="a" style="left:903px;top:625.500px;width:120px;text-align:right;line-height:14px;white-space:nowrap;color:#1e7a22">Stable</div>
<div class="a" style="left:1030px;top:582.500px;line-height:14px;white-space:nowrap">A:</div><div class="a" style="left:1072.800px;top:582.500px;width:120px;text-align:right;line-height:14px;white-space:nowrap">0.00 deg</div>
<div class="a" style="left:1030px;top:596.900px;line-height:14px;white-space:nowrap">B:</div><div class="a" style="left:1072.800px;top:596.900px;width:120px;text-align:right;line-height:14px;white-space:nowrap">0.00 deg</div>
<div class="a" style="left:1030px;top:611.200px;line-height:14px;white-space:nowrap">C2 Lens:</div><div class="a" style="left:1072.700px;top:611.200px;width:120px;text-align:right;line-height:14px;white-space:nowrap">18.243 %</div>
</div>
<!-- TeamViewer-style side tab -->
<svg class="a" style="left:1182px;top:578px" width="18" height="44"><path d="M18 5.300h-10.500c-2.200 0-3.200 1-3.200 3.200v19.500c0 1 .5 1.800 1.500 2.400L18 38.500z" fill="#fdfdfd"/><path d="M4.500 28.500c0 1 .5 1.600 1.500 2.200L18 38.700" stroke="#999" stroke-width="0.500" fill="none"/><rect x="6" y="9.600" width="12" height="11.900" fill="#1a8ce8"/><circle cx="12.800" cy="15.500" r="4.700" fill="#fff"/><path d="M9 15.500l2.300-1.800v1.100h3v-1.100l2.300 1.800-2.300 1.800v-1.100h-3v1.100z" fill="#1a8ce8"/></svg>



</body></html>
